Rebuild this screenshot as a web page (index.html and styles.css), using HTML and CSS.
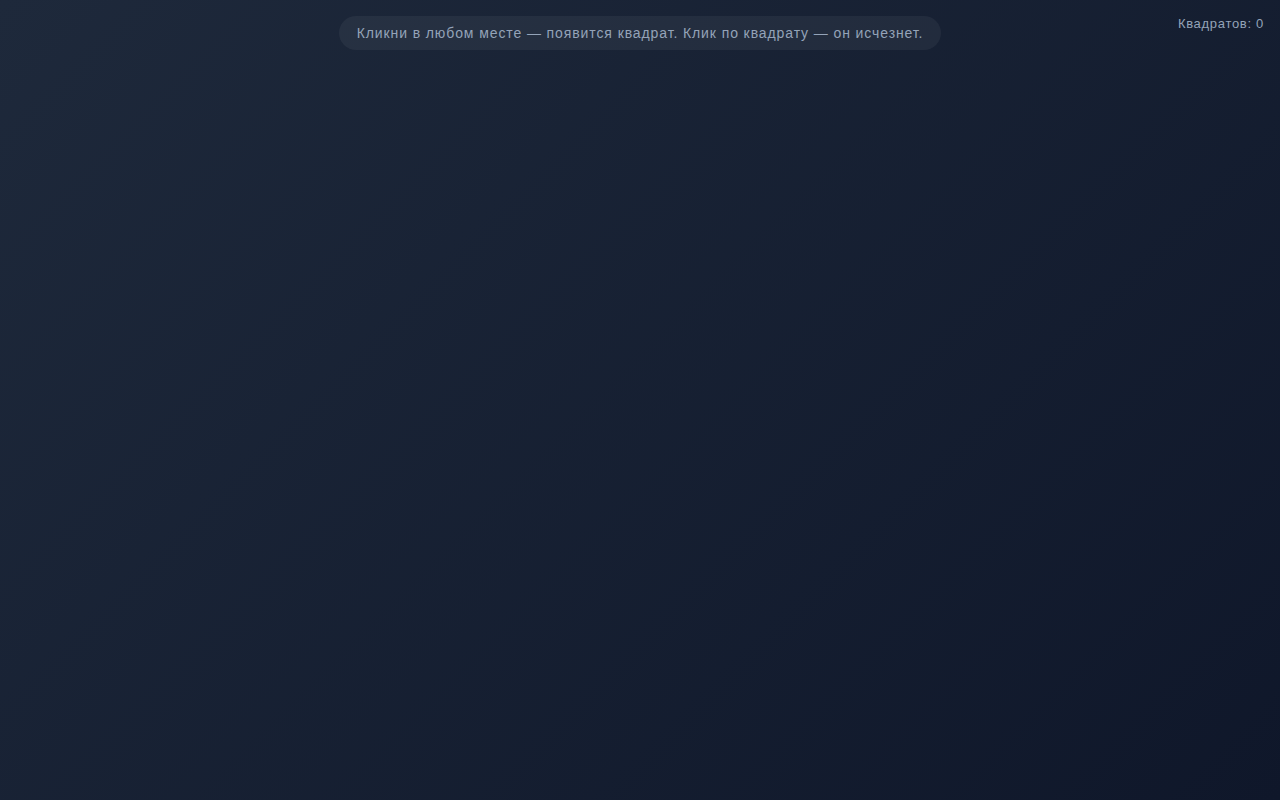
FILE: index.html
```html
<!DOCTYPE html>
<html lang="ru">
<head>
<meta charset="utf-8">
<title>Квадраты</title>
<link rel="stylesheet" href="styles.css">
</head>
<body>
<div class="top">
  <div class="hint">Кликни в любом месте — появится квадрат. Клик по квадрату — он исчезнет.</div>
</div>
<div class="counter">Квадратов: 0</div>
</body>
</html>
```
FILE: styles.css
```css
html, body {
  margin: 0;
  height: 100%;
}
body {
  background: linear-gradient(135deg, #1e293b 0%, #0f172a 100%);
  font-family: "Liberation Sans", Arial, sans-serif;
  color: #94a3b8;
  overflow: hidden;
}
.top {
  display: flex;
  justify-content: center;
  padding-top: 16px;
}
.hint {
  background: rgba(255, 255, 255, 0.05);
  border-radius: 17px;
  padding: 0 18px;
  height: 34px;
  line-height: 34px;
  font-size: 14px;
  letter-spacing: 0.9px;
}
.counter {
  position: absolute;
  top: 16px;
  right: 16px;
  font-size: 13px;
  line-height: 16px;
  letter-spacing: 0.7px;
}
```
